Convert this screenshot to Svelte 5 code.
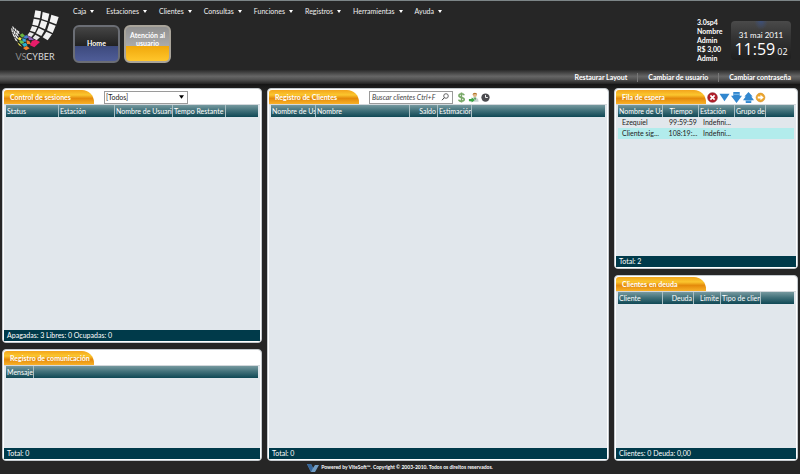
<script>
    const menus = ['Caja', 'Estaciones', 'Clientes', 'Consultas', 'Funciones', 'Registros', 'Herramientas', 'Ayuda'];
    const account = ['3.0sp4', 'Nombre', 'Admin', 'R$ 3,00', 'Admin'];
    const links = ['Restaurar Layout', 'Cambiar de usuario', 'Cambiar contraseña'];

    const tiles = [
        // right wing
        ['88,18 105,21 102,42 84,39', '#f4f4f4'],
        ['110,23 130,28 125,50 107,44', '#f4f4f4'],
        ['136,31 158,38 151,60 131,52', '#f4f4f4'],
        ['83,43 101,46 96,65 79,61', '#f4f4f4'],
        ['106,48 124,54 117,75 100,67', '#f4f4f4'],
        ['130,57 149,64 140,86 123,78', '#f4f4f4'],
        ['78,65 94,69 87,84 72,79', '#f0f0f0'],
        ['98,71 115,79 106,95 90,87', '#f0f0f0'],
        ['121,82 138,90 125,108 110,99', '#f0f0f0'],
        ['71,83 84,88 76,98 64,93', '#e8e8e8'],
        ['88,91 102,99 92,108 80,101', '#e8e8e8'],
        // left wing
        ['19,65 23,68 25,77 20,73', '#eeeeee'],
        ['25,70 30,74 33,83 27,79', '#eeeeee'],
        ['32,76 38,81 41,90 34,86', '#eeeeee'],
        ['15,70 19,75 22,85 17,81', '#eeeeee'],
        ['21,76 26,81 30,92 24,87', '#eeeeee'],
        ['28,82 34,87 39,97 32,93', '#eeeeee'],
        ['18,83 23,88 29,100 22,96', '#eeeeee'],
        ['25,90 32,94 38,105 31,102', '#eeeeee'],
        ['24,99 30,103 36,112 29,109', '#eeeeee'],
        // coloured floor
        ['41,92 49,87 57,94 48,100', '#69b43f'],
        ['51,99 61,92 69,99 60,103', '#4a7fd0'],
        ['65,94 77,100 84,107 69,107', '#8d5bb4'],
        ['40,98 47,102 43,109 35,104', '#f0e54b'],
        ['49,102 59,104 60,112 50,112', '#2fa7d8'],
        ['39,110 48,108 55,115 45,119', '#6cc04a'],
        ['34,114 41,119 48,127 39,123', '#e9e14a'],
        ['61,108 70,110 75,120 63,119', '#ef7f35'],
        ['48,119 59,115 65,123 54,128', '#28b2c9'],
        ['51,131 62,125 71,132 60,138', '#f5822a'],
        ['78,109 90,106 102,113 85,129 72,123', '#e81c69']
    ];

    const sessionCols = [
        { label: 'Status', width: 53 },
        { label: 'Estación', width: 56 },
        { label: 'Nombre de Usuario', width: 58 },
        { label: 'Tempo Restante', width: 53 }
    ];
    const clientCols = [
        { label: 'Nombre de Us', width: 45 },
        { label: 'Nombre', width: 94 },
        { label: 'Saldo', width: 28, align: 'right' },
        { label: 'Estimación', width: 34 }
    ];
    const queueCols = [
        { label: 'Nombre de Us', width: 45 },
        { label: 'Tiempo', width: 36, align: 'center' },
        { label: 'Estación', width: 36 },
        { label: 'Grupo de', width: 31 }
    ];
    const debtCols = [
        { label: 'Cliente', width: 45 },
        { label: 'Deuda', width: 31, align: 'right' },
        { label: 'Limite', width: 27, align: 'right' },
        { label: 'Tipo de clien', width: 40 }
    ];
    const queue = [
        ['Ezequiel', '99:59:59', 'Indefini...', ''],
        ['Cliente sig...', '108:19:...', 'Indefini...', '']
    ];

    let filter = $state('[Todos]');
    let search = $state('');
    let selected = $state(1);
</script>

{#snippet grid(cols, rows)}
    <div class="grid">
        <table>
            <colgroup>
                {#each cols as col}
                    <col style="width: {col.width}px" />
                {/each}
                <col />
            </colgroup>
            <thead>
                <tr>
                    {#each cols as col}
                        <th class={col.align}>{col.label}</th>
                    {/each}
                    <th></th>
                </tr>
            </thead>
            <tbody>
                {#each rows as row, i}
                    <tr class:selected={i === selected} onclick={() => (selected = i)}>
                        {#each row as cell, j}
                            <td class={cols[j].align}>{cell}</td>
                        {/each}
                        <td></td>
                    </tr>
                {/each}
            </tbody>
        </table>
    </div>
{/snippet}

<div class="app">
    <header>
        <div class="logo">
            <svg viewBox="12 14 150 126" aria-hidden="true">
                {#each tiles as [points, fill]}
                    <polygon {points} {fill} />
                {/each}
            </svg>
            <div class="brand"><span>VS</span>CYBER</div>
        </div>

        <div class="main">
            <nav>
                {#each menus as menu}
                    <button class="menu">
                        {menu}
                        <svg viewBox="0 0 4 3" aria-hidden="true"><path d="M0 0h4L2 3z" /></svg>
                    </button>
                {/each}
            </nav>
            <div class="tabs">
                <button class="big home">Home</button>
                <button class="big support">Atención al usuario</button>
            </div>
        </div>

        <div class="account">
            {#each account as line}
                <div>{line}</div>
            {/each}
        </div>

        <div class="clock">
            <div class="date">31 mai 2011</div>
            <div class="time">11:59<span>02</span></div>
        </div>
    </header>

    <div class="bar">
        {#each links as link}
            <a href="#top">{link}</a>
        {/each}
    </div>

    <main>
        <div class="column">
            <section class="panel sessions">
                <div class="head">
                    <h2>Control de sesiones</h2>
                    <div class="select">
                        <select bind:value={filter} aria-label="Filtro de estaciones">
                            <option>[Todos]</option>
                        </select>
                        <svg viewBox="0 0 6 4" aria-hidden="true"><path d="M0 0h6L3 4z" /></svg>
                    </div>
                </div>
                {@render grid(sessionCols, [])}
                <div class="total">Apagadas: 3 Libres: 0 Ocupadas: 0</div>
            </section>

            <section class="panel messages">
                <div class="head"><h2>Registro de comunicación</h2></div>
                {@render grid([{ label: 'Mensaje', width: 28 }], [])}
                <div class="total">Total: 0</div>
            </section>
        </div>

        <div class="column">
            <section class="panel clients">
                <div class="head">
                    <h2>Registro de Clientes</h2>
                    <div class="search">
                        <input type="text" bind:value={search} placeholder="Buscar clientes Ctrl+F" aria-label="Buscar clientes" />
                        <svg viewBox="0 0 8 8" aria-hidden="true">
                            <circle cx="5" cy="3" r="2.3" fill="none" stroke="#444" stroke-width=".8" />
                            <path d="M3.3 4.7 1 7.2" stroke="#444" stroke-width="1" />
                        </svg>
                    </div>
                    <div class="tools">
                        <button aria-label="Saldo">
                            <svg viewBox="0 0 12 12">
                                <path d="M9 3.5C8.5 2.2 7.5 2 6 2 4.2 2 3.2 2.8 3.2 4c0 2.8 5.8 1.3 5.8 4 0 1.3-1.2 2-3 2-1.7 0-2.8-.5-3-1.8M6 .5v11" fill="none" stroke="#78a867" stroke-width="1.7" />
                            </svg>
                        </button>
                        <button aria-label="Nuevo cliente">
                            <svg viewBox="0 0 12 12">
                                <path d="M2.5 10.5C2.5 7.5 4 6 7 6s4.5 1.5 4.5 4.5z" fill="#c9d2d2" />
                                <path d="M6 6h3l-1 3z" fill="#58a056" />
                                <circle cx="7.5" cy="3.3" r="2.3" fill="#e0b98b" />
                                <path d="M5 3C5 0 10 0 10 3 8.500 2 7 2 5 3z" fill="#b2762b" />
                                <path d="M1 7.5h3V6l3.5 2.8L4 11.5V10H1z" fill="#3aa541" />
                            </svg>
                        </button>
                        <button aria-label="Historial">
                            <svg viewBox="0 0 12 12">
                                <circle cx="6" cy="6" r="4.5" fill="#4b4b4f" />
                                <path d="M6 3.2V6h2.500" fill="none" stroke="#fff" stroke-width="1" />
                            </svg>
                        </button>
                    </div>
                </div>
                {@render grid(clientCols, [])}
                <div class="total">Total: 0</div>
            </section>
        </div>

        <div class="column">
            <section class="panel queue">
                <div class="head">
                    <h2>Fila de espera</h2>
                    <div class="tools">
                        <button aria-label="Quitar">
                            <svg viewBox="0 0 12 12">
                                <circle cx="6" cy="6" r="5.3" fill="#b3202b" stroke="#7d1820" stroke-width=".6" />
                                <path d="M3.7 3.7l4.6 4.6M8.3 3.7L3.7 8.3" stroke="#fff" stroke-width="1.8" />
                            </svg>
                        </button>
                        <button aria-label="Bajar">
                            <svg viewBox="0 0 12 12"><path d="M.5 2h11L6 10z" fill="#3187cf" /></svg>
                        </button>
                        <button aria-label="Bajar al final">
                            <svg viewBox="0 0 12 12">
                                <path d="M2.5 0h7v4H12L6 12 0 4h2.5z" fill="#3187cf" />
                                <path d="M2.5 2.5h7" stroke="#8cc4ec" />
                            </svg>
                        </button>
                        <button aria-label="Subir al principio">
                            <svg viewBox="0 0 12 12">
                                <path d="M6 0l4.5 5H9l3 4H9v3H3V9H0l3-4H1.5z" fill="#3187cf" />
                                <path d="M3 9.5h6" stroke="#8cc4ec" />
                            </svg>
                        </button>
                        <button aria-label="Siguiente">
                            <svg viewBox="0 0 12 12">
                                <circle cx="6" cy="6" r="4.8" fill="#eda62c" stroke="#d08a20" stroke-width=".6" />
                                <path d="M3 5h3V3l3.5 3L6 9V7H3z" fill="#fff" />
                            </svg>
                        </button>
                    </div>
                </div>
                {@render grid(queueCols, queue)}
                <div class="total">Total: 2</div>
            </section>

            <section class="panel debts">
                <div class="head"><h2>Clientes en deuda</h2></div>
                {@render grid(debtCols, [])}
                <div class="total">Clientes: 0 Deuda: 0,00</div>
            </section>
        </div>
    </main>

    <footer>
        <svg viewBox="0 0 12 8" aria-hidden="true">
            <path d="M0 0h4l2 4 2-3h4L8 8H4z" fill="#6f9cc4" />
            <path d="M4 0l2 4-2 4L0 0z" fill="#35669a" />
        </svg>
        Powered by ViteSoft™. Copyright © 2003-2010. Todos os direitos reservados.
    </footer>
</div>

<style>
    :global(body) {
        margin: 0;
        background: #262626;
    }

    .app {
        box-sizing: border-box;
        display: flex;
        flex-direction: column;
        min-height: 100vh;
        border-top: 1px solid #7c8587;
        background: #262626;
        color: #fff;
        font-family: Lato, 'Open Sans', sans-serif;
        font-size: 7px;
        line-height: 9px;
    }

    button,
    input,
    select {
        margin: 0;
        padding: 0;
        border: none;
        background: none;
        color: inherit;
        font: inherit;
    }

    svg {
        display: block;
    }

    header {
        display: flex;
        align-items: flex-start;
        height: 69px;
        padding: 0 9px 0 10px;
    }

    .logo {
        width: 50px;
        padding-top: 8px;
    }

    .logo svg {
        width: 50px;
        height: 42px;
    }

    .brand {
        font-size: 9px;
        line-height: 12px;
        text-align: center;
        color: #d8d8d8;
    }

    .brand span {
        color: #8e8e8e;
    }

    .main {
        flex: 1;
        padding: 5px 0 0 13px;
    }

    nav {
        display: flex;
        gap: 12px;
    }

    .menu {
        display: flex;
        align-items: center;
        gap: 4px;
        line-height: 10px;
        color: #f0f0f0;
    }

    .menu svg {
        width: 4px;
        height: 3px;
        fill: #fff;
    }

    .tabs {
        display: flex;
        gap: 4px;
        margin-top: 9px;
    }

    .big {
        width: 47px;
        height: 38px;
        border: 2px solid #777b82;
        border-radius: 6px;
        font-weight: 700;
        line-height: 8px;
    }

    .home {
        padding-bottom: 2px;
        border-color: #6b6e75;
        background: linear-gradient(#454545, #222 55%, #3d4a7d 56%, #4f5d98);
    }

    .support {
        padding-bottom: 11px;
        border-color: #a9a49a;
        background: linear-gradient(#909090, #aaa 55%, #f0a80c 56%, #ffc62b);
    }

    .account {
        width: 34px;
        padding-top: 17px;
        font-weight: 700;
    }

    .clock {
        box-sizing: border-box;
        width: 60px;
        height: 39px;
        margin-top: 20px;
        padding-top: 9px;
        border-radius: 4px;
        background: radial-gradient(ellipse at top, #3d4f78 0, transparent 16%), linear-gradient(#4a4a4a, #303030 50%, #1e1e1e);
        text-align: center;
    }

    .date {
        font-size: 8px;
        line-height: 10px;
    }

    .time {
        font-family: 'Open Sans', sans-serif;
        font-size: 16px;
        line-height: 18px;
        white-space: nowrap;
    }

    .time span {
        margin-left: 2px;
        font-size: 9px;
    }

    .bar {
        display: flex;
        align-items: center;
        justify-content: flex-end;
        height: 14px;
        padding-right: 9px;
        background: linear-gradient(#2b2b2b, #666 45%, #555 65%, #222);
    }

    .bar a {
        color: #fff;
        font-weight: 700;
        text-decoration: none;
    }

    .bar a + a {
        margin-left: 10px;
        padding-left: 10px;
        border-left: 1px solid #777;
    }

    main {
        flex: 1;
        display: grid;
        grid-template-columns: 260fr 342fr 184fr;
        gap: 5px;
        padding: 4px 2px 0;
        background: linear-gradient(#151515, #262626 8px);
    }

    .column {
        display: flex;
        flex-direction: column;
        gap: 6px;
        min-width: 0;
    }

    .panel {
        box-sizing: border-box;
        display: flex;
        flex-direction: column;
        flex: 1 1 0;
        padding: 1px;
        border: 1px solid #c3c9cd;
        border-radius: 4px;
        background: #fff;
    }

    .sessions {
        flex-grow: 257;
    }

    .messages {
        flex-grow: 110;
    }

    .queue {
        flex-grow: 181;
    }

    .debts {
        flex-grow: 186;
    }

    .head {
        display: flex;
        align-items: center;
        height: 14px;
    }

    h2 {
        box-sizing: border-box;
        width: 90px;
        height: 14px;
        margin: 0;
        padding-left: 6px;
        border-radius: 3px 12px 0 0;
        background: linear-gradient(#f3a51c, #fbc62e 35%, #e48a0b 60%, #f9b127);
        font-size: 7px;
        font-weight: 700;
        line-height: 14px;
        white-space: nowrap;
    }

    .select,
    .search {
        box-sizing: border-box;
        display: flex;
        align-items: center;
        width: 84px;
        height: 13px;
        margin-left: 10px;
        padding-right: 3px;
        border: 1px solid #9a9a9a;
        background: #fff;
        color: #222;
    }

    .select select {
        flex: 1;
        appearance: none;
        height: 11px;
        padding-left: 1px;
        margin-right: -6px;
    }

    .select svg {
        width: 5px;
        height: 4px;
        pointer-events: none;
    }

    .search input {
        flex: 1;
        min-width: 0;
        padding-left: 2px;
        font-style: italic;
    }

    .search input::placeholder {
        color: #444;
    }

    .search svg {
        width: 8px;
        height: 8px;
    }

    .tools {
        display: flex;
        gap: 1px;
        margin-left: 3px;
    }

    .tools svg {
        width: 11px;
        height: 11px;
    }

    .queue .tools {
        margin-left: 1px;
    }

    .grid {
        flex: 1;
        padding: 0 2px;
        border: solid #d3d8dc;
        border-width: 1px 0 0;
        background: #e1e7ec;
    }

    table {
        width: 100%;
        table-layout: fixed;
        border-collapse: separate;
        border-spacing: 0;
    }

    thead tr {
        background: linear-gradient(#76999f, #43727b 45%, #0f4855);
    }

    th,
    td {
        height: 12px;
        padding: 0 0 0 1px;
        overflow: hidden;
        text-align: left;
        white-space: nowrap;
    }

    th {
        font-weight: 400;
        line-height: 12px;
        border-right: 1px solid #a9bfc3;
    }

    th:last-child {
        border-right: none;
    }

    td {
        height: 11px;
        padding-left: 4px;
        color: #222;
        line-height: 11px;
    }

    .right {
        padding-right: 1px;
        text-align: right;
    }

    .center {
        text-align: center;
    }

    .selected {
        background: #b2ecec;
    }

    .total {
        height: 11px;
        padding-left: 3px;
        background: #003a4a;
        line-height: 11px;
    }

    footer {
        display: flex;
        align-items: center;
        justify-content: center;
        gap: 2px;
        height: 13px;
        font-size: 5px;
        font-weight: 700;
    }

    footer svg {
        width: 12px;
        height: 8px;
    }
</style>
